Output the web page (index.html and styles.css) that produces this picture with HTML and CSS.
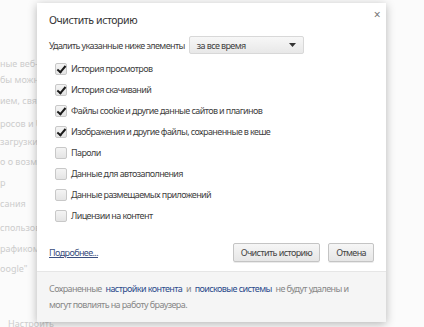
FILE: index.html
```html
<!DOCTYPE html>
<html lang="ru">
<head>
    <meta charset="UTF-8">
    <title>Очистить историю</title>
    <link rel="stylesheet" href="styles.css">
</head>
<body>
<div class="page">
    <p class="l1">ные веб-сайты</p>
    <p class="l2">бы можно</p>
    <p class="l3">ием, связанные</p>
    <p class="l4">росов и URL</p>
    <p class="l5">загрузки</p>
    <p class="l6">о о возможных</p>
    <p class="l7">р</p>
    <p class="l8">сания</p>
    <p class="l9">спользование</p>
    <p class="l10">рафиком</p>
    <p class="l11">oogle"</p>
    <p class="l12">Настроить</p>
</div>

<div class="dialog">
    <div class="head">
        <h1>Очистить историю</h1>
        <span class="close">&#215;</span>
    </div>

    <div class="content">
        <div class="period">
            <span>Удалить указанные ниже элементы</span>
            <div class="select">
                <span>за все время</span>
                <svg width="7" height="4" viewBox="0 0 7 4"><path d="M0 0h7L3.5 4z" fill="#333"/></svg>
            </div>
        </div>

        <ul class="items">
            <li><span class="box on"></span>История просмотров</li>
            <li><span class="box on"></span>История скачиваний</li>
            <li><span class="box on"></span>Файлы cookie и другие данные сайтов и плагинов</li>
            <li><span class="box on"></span>Изображения и другие файлы, сохраненные в кеше</li>
            <li><span class="box"></span>Пароли</li>
            <li><span class="box"></span>Данные для автозаполнения</li>
            <li><span class="box"></span>Данные размещаемых приложений</li>
            <li><span class="box"></span>Лицензии на контент</li>
        </ul>

        <div class="actions">
            <a class="more" href="#">Подробнее...</a>
            <button class="btn">Очистить историю</button>
            <button class="btn">Отмена</button>
        </div>
    </div>

    <div class="foot">
        <span class="nowrap">Сохраненные <a href="#">настройки контента</a> и <a href="#">поисковые системы</a> не будут удалены и</span><br>
        могут повлиять на работу браузера.
    </div>
</div>
</body>
</html>
```

FILE: styles.css
```css
body {
    margin: 0;
    width: 424px;
    height: 327px;
    overflow: hidden;
    background: #fbfbfb;
    font-family: "Noto Sans", "Open Sans", sans-serif;
    position: relative;
}
.page {
    color: #cdcdcd;
    font-size: 9px;
    line-height: 12px;
}
.page p {
    margin: 0;
}
.l1 { padding-top: 58px; }
.l2 { margin-top: 4px !important; }
.l3 { margin-top: 9px !important; }
.l4 { margin-top: 11px !important; }
.l5 { margin-top: 6px !important; }
.l6 { margin-top: 8px !important; }
.l7 { margin-top: 9px !important; }
.l8 { margin-top: 9px !important; }
.l9 { margin-top: 12px !important; }
.l10 { margin-top: 9px !important; }
.l11 { margin-top: 8px !important; }
.l12 { margin-top: 43px !important; padding-left: 8px; }

.dialog {
    position: absolute;
    left: 37px;
    top: 3px;
    width: 349px;
    background: #fff;
    box-shadow: 0 2px 9px rgba(0, 0, 0, 0.28);
    color: #3f3f3f;
    font-size: 9px;
    letter-spacing: -0.6px;
}
.head {
    position: relative;
    padding: 9px 12px 0;
}
.head h1 {
    margin: 0;
    font-size: 10.5px;
    font-weight: normal;
    color: #333;
    line-height: 16px;
    letter-spacing: -0.4px;
}
.close {
    position: absolute;
    right: 6px;
    top: 3px;
    font-size: 12px;
    color: #777;
}
.content {
    padding: 0 12px;
}
.period {
    display: flex;
    align-items: center;
    gap: 4px;
    margin-top: 8px;
}
.select {
    width: 99px;
    height: 16px;
    padding: 0 7px;
    display: flex;
    align-items: center;
    justify-content: space-between;
    border: 1px solid #d8d8d8;
    border-radius: 2px;
    background: linear-gradient(#f7f7f7, #e8e8e8);
}
.items {
    list-style: none;
    margin: 4px 0 0;
    padding: 0 0 0 6px;
}
.items li {
    display: flex;
    align-items: center;
    gap: 4px;
    height: 21px;
}
.box {
    width: 10px;
    height: 10px;
    border: 1px solid #c8c8c8;
    border-radius: 2px;
    background: linear-gradient(#f4f4f4, #e4e4e4);
    position: relative;
}
.box.on::after {
    content: "";
    position: absolute;
    left: 3px;
    top: 0;
    width: 3px;
    height: 7px;
    border: solid #1a1a1a;
    border-width: 0 2px 2px 0;
    transform: rotate(40deg);
}
.actions {
    display: flex;
    align-items: center;
    gap: 8px;
    margin-top: 17px;
    padding-bottom: 9px;
}
.more {
    color: #3b4f80;
    margin-right: auto;
}
.btn {
    font-family: inherit;
    font-size: 9px;
    letter-spacing: -0.6px;
    color: #444;
    height: 19px;
    padding: 0 7px;
    border: 1px solid #c4c4c4;
    border-radius: 2px;
    background: linear-gradient(#f6f6f6, #e6e6e6);
    box-shadow: 0 1px 0 rgba(0, 0, 0, 0.08);
}
.foot {
    background: #f5f5f5;
    border-top: 1px solid #e6e6e6;
    padding: 9px 12px 9px;
    line-height: 16px;
    color: #888;
}
.nowrap {
    white-space: nowrap;
}
.foot a {
    color: #2c4b8c;
    text-decoration: none;
    padding: 0 2px;
}
```
